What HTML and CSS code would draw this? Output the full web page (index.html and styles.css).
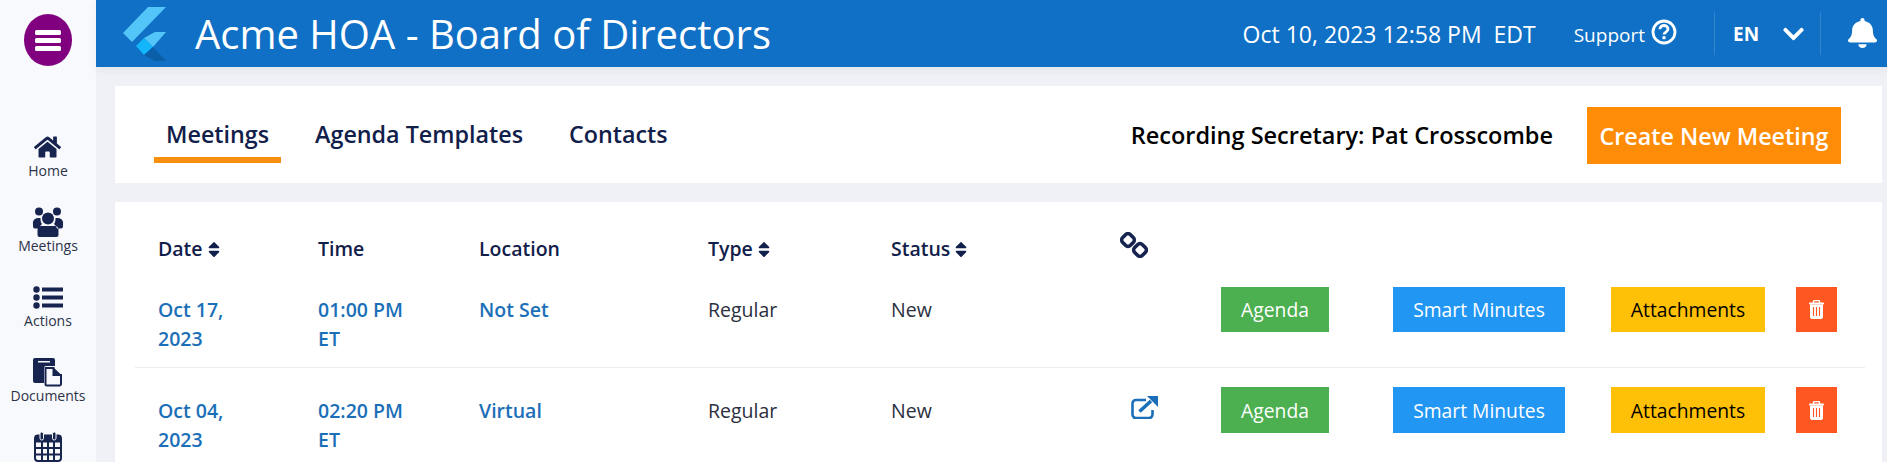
FILE: index.html
```
<!DOCTYPE html>
<html lang="en">
<head>
<meta charset="utf-8">
<title>Acme HOA - Board of Directors</title>
<link rel="stylesheet" href="styles.css">
</head>
<body>
<aside class="sidebar">
  <button class="menu-btn" aria-label="Menu">
    <svg width="26" height="22" viewBox="0 0 26 22"><rect x="0" y="1" width="26" height="5" rx="1.5"/><rect x="0" y="9" width="26" height="5" rx="1.5"/><rect x="0" y="17" width="26" height="5" rx="1.5"/></svg>
  </button>
  <nav class="side-nav">
    <a class="side-item"><span class="side-icon"><svg width="27" height="24" viewBox="0 0 576 512"><path d="M280.37 148.26L96 300.11V464a16 16 0 0 0 16 16l112.06-.29a16 16 0 0 0 15.92-16V368a16 16 0 0 1 16-16h64a16 16 0 0 1 16 16v95.64a16 16 0 0 0 16 16.05L464 480a16 16 0 0 0 16-16V300L295.67 148.26a12.19 12.19 0 0 0-15.3 0zM571.6 251.47L488 182.56V44.05a12 12 0 0 0-12-12h-56a12 12 0 0 0-12 12v72.61L318.47 43a48 48 0 0 0-61 0L4.34 251.47a12 12 0 0 0-1.6 16.9l25.5 31A12 12 0 0 0 45.15 301l235.22-193.74a12.19 12.19 0 0 1 15.3 0L530.9 301a12 12 0 0 0 16.9-1.6l25.5-31a12 12 0 0 0-1.7-16.93z"/></svg></span><span class="side-label">Home</span></a>
    <a class="side-item"><span class="side-icon"><svg width="32" height="30" viewBox="0 0 32 30"><circle cx="7" cy="4.5" r="4"/><circle cx="25" cy="4.5" r="4"/><circle cx="16" cy="11.5" r="6"/><path d="M1 17a5 5 0 0 1 5-6h2.500a9 9 0 0 0 1.500 6a9 9 0 0 0-3 4.500H3a2 2 0 0 1-2-2zM31 17a5 5 0 0 0-5-6h-2.500a9 9 0 0 1-1.500 6a9 9 0 0 1 3 4.500h4a2 2 0 0 0 2-2zM9.500 19h13a4 4 0 0 1 4 4v5a2 2 0 0 1-2 2h-17a2 2 0 0 1-2-2v-5a4 4 0 0 1 4-4z"/></svg></span><span class="side-label">Meetings</span></a>
    <a class="side-item"><span class="side-icon"><svg width="30" height="23" viewBox="0 0 30 23"><circle cx="3.500" cy="3.500" r="3.200"/><circle cx="3.500" cy="11.500" r="3.200"/><circle cx="3.500" cy="19.500" r="3.200"/><rect x="9" y="1.500" width="21" height="4"/><rect x="9" y="9.500" width="21" height="4"/><rect x="9" y="17.500" width="21" height="4"/></svg></span><span class="side-label">Actions</span></a>
    <a class="side-item"><span class="side-icon"><svg width="30" height="29" viewBox="0 0 30 29"><path d="M2 0h18a2 2 0 0 1 2 2v6H13a2 2 0 0 0-2 2v15H2a2 2 0 0 1-2-2V2a2 2 0 0 1 2-2z"/><rect x="5" y="3" width="12" height="1.500" fill="#f8f9fc"/><path d="M12.500 10h8v7h7.500v9a1.500 1.500 0 0 1-1.500 1.500H14a1.500 1.500 0 0 1-1.500-1.500z" fill="#f8f9fc" stroke="#16244f" stroke-width="2"/><path d="M20.500 9.500L29 17.500h-8.500z"/></svg></span><span class="side-label">Documents</span></a>
    <a class="side-item" aria-label="Calendar"><span class="side-icon"><svg width="28" height="30" viewBox="0 0 28 30"><rect x="1" y="3.500" width="26" height="25.500" rx="3" fill="none" stroke="#16244f" stroke-width="2"/><rect x="1" y="3.500" width="26" height="7"/><rect x="6" y="0" width="3.500" height="8" rx="1.700" stroke="#f8f9fc"/><rect x="18.500" y="0" width="3.500" height="8" rx="1.700" stroke="#f8f9fc"/><path d="M1 16h26M1 22.500h26M8 10v19M14 10v19M20 10v19" stroke="#16244f" stroke-width="2" fill="none"/></svg></span></a>
  </nav>
</aside>
<div class="page">
  <header class="topbar">
    <svg class="logo" width="44" height="56" viewBox="0 0 44 56"><path d="M43 1H25L0 27l9 9z" fill="#54c5f8"/><path d="M43 26H32L21 32l9 9z" fill="#54c5f8"/><path d="M13 40l8-8 9 9-9 8z" fill="#12b6fb"/><path d="M21 49l9-8 13 14H32z" fill="#0a5fa8"/></svg>
    <h1 class="title">Acme HOA - Board of Directors</h1>
    <span class="clock">Oct 10, 2023 12:58 PM&nbsp; EDT</span>
    <a class="support">Support</a>
    <svg class="help" width="26" height="26" viewBox="0 0 26 26"><circle cx="13" cy="13" r="11" fill="none" stroke="#fff" stroke-width="2.800"/><path d="M9 10.200c0-2.500 2-3.700 4-3.700s4 1.300 4 3.500c0 3-4 3-4 5.500" fill="none" stroke="#fff" stroke-width="2.800"/><rect x="11.500" y="17.200" width="3" height="3" fill="#fff"/></svg>
    <div class="lang"><span class="lang-code">EN</span><svg class="chevron" width="21" height="24" viewBox="0 0 448 512"><path d="M207.029 381.476L12.686 187.132c-9.373-9.373-9.373-24.569 0-33.941l22.667-22.667c9.357-9.357 24.522-9.375 33.901-.04L224 284.505l154.745-154.021c9.379-9.335 24.544-9.317 33.901.04l22.667 22.667c9.373 9.373 9.373 24.569 0 33.941L240.971 381.476c-9.373 9.372-24.569 9.372-33.942 0z"/></svg></div>
    <svg class="bell" width="29" height="30" viewBox="0 0 448 512" preserveAspectRatio="none"><path d="M224 512c35.32 0 63.97-28.65 63.97-64H160.03c0 35.35 28.65 64 63.97 64zm215.39-149.71c-19.32-20.76-55.47-51.99-55.47-154.29 0-77.7-54.48-139.9-127.94-155.16V32c0-17.67-14.32-32-31.98-32s-31.98 14.33-31.98 32v20.84C118.56 68.1 64.08 130.3 64.08 208c0 102.3-36.15 133.53-55.47 154.29-6 6.45-8.66 14.16-8.61 21.71.11 16.4 12.98 32 32.1 32h383.8c19.12 0 32-15.6 32.1-32 .05-7.55-2.61-15.27-8.61-21.71z"/></svg>
  </header>
  <main class="content">
    <section class="card tabs-card">
      <nav class="tabs">
        <a class="tab active">Meetings</a>
        <a class="tab">Agenda Templates</a>
        <a class="tab">Contacts</a>
      </nav>
      <span class="secretary">Recording Secretary: Pat Crosscombe</span>
      <button class="create">Create New Meeting</button>
    </section>
    <section class="card table-card">
      <div class="grid head">
        <span class="th">Date<svg class="sort" width="12" height="19" viewBox="0 0 320 512"><path d="M41 288h238c21.400 0 32.100 25.900 17 41L177 448c-9.400 9.400-24.600 9.400-33.900 0L24 329c-15.100-15.100-4.400-41 17-41zm255-105L177 64c-9.400-9.400-24.600-9.400-33.900 0L24 183c-15.100 15.100-4.400 41 17 41h238c21.400 0 32.100-25.900 17-41z"/></svg></span>
        <span class="th">Time</span>
        <span class="th">Location</span>
        <span class="th">Type<svg class="sort" width="12" height="19" viewBox="0 0 320 512"><path d="M41 288h238c21.400 0 32.100 25.900 17 41L177 448c-9.400 9.400-24.600 9.400-33.900 0L24 329c-15.100-15.100-4.400-41 17-41zm255-105L177 64c-9.400-9.400-24.600-9.400-33.900 0L24 183c-15.100 15.100-4.400 41 17 41h238c21.400 0 32.100-25.900 17-41z"/></svg></span>
        <span class="th">Status<svg class="sort" width="12" height="19" viewBox="0 0 320 512"><path d="M41 288h238c21.400 0 32.100 25.900 17 41L177 448c-9.400 9.400-24.600 9.400-33.900 0L24 329c-15.100-15.100-4.400-41 17-41zm255-105L177 64c-9.400-9.400-24.600-9.400-33.900 0L24 183c-15.100 15.100-4.400 41 17 41h238c21.400 0 32.100-25.900 17-41z"/></svg></span>
        <svg class="link-head" width="28" height="26" viewBox="0 0 28 26"><g fill="none" stroke="#16244f" stroke-width="3.600"><rect x="2.500" y="2.500" width="11" height="11" rx="3.500" transform="rotate(45 8 8)"/><rect x="14.500" y="12.500" width="11" height="11" rx="3.500" transform="rotate(45 20 18)"/></g></svg>
      </div>
      <div class="grid row first">
        <a class="cell link">Oct 17, 2023</a>
        <a class="cell link">01:00 PM ET</a>
        <a class="cell link">Not Set</a>
        <span class="cell">Regular</span>
        <span class="cell">New</span>
        <span></span>
        <div class="actions">
          <button class="btn agenda">Agenda</button>
          <button class="btn minutes">Smart Minutes</button>
          <button class="btn attach">Attachments</button>
          <button class="btn trash" aria-label="Delete"><svg width="15" height="19" viewBox="0 0 15 19"><path d="M1 4.500h13v12.500a2 2 0 0 1-2 2H3a2 2 0 0 1-2-2z" fill="#fff"/><rect x="0" y="2.500" width="15" height="2" rx=".8" fill="#fff"/><path d="M4.500 3V1.500a1 1 0 0 1 1-1h4a1 1 0 0 1 1 1V3" fill="none" stroke="#fff" stroke-width="1.400"/><path d="M4.500 7v9M7.500 7v9M10.500 7v9" stroke="#ff5722" stroke-width="1.100"/></svg></button>
        </div>
      </div>
      <div class="grid row second">
        <a class="cell link">Oct 04, 2023</a>
        <a class="cell link">02:20 PM ET</a>
        <a class="cell link">Virtual</a>
        <span class="cell">Regular</span>
        <span class="cell">New</span>
        <svg class="ext" width="28" height="23" viewBox="0 0 28 23"><path d="M15 4H5a3.500 3.500 0 0 0-3.500 3.500v11A3.500 3.500 0 0 0 5 22h13a3.500 3.500 0 0 0 3.500-3.500V14" fill="none" stroke="#1b6fb8" stroke-width="2.600"/><path d="M8.500 15.500L20 5" stroke="#1b6fb8" stroke-width="3.600" fill="none"/><path d="M16 0h11v11z" fill="#1b6fb8"/></svg>
        <div class="actions">
          <button class="btn agenda">Agenda</button>
          <button class="btn minutes">Smart Minutes</button>
          <button class="btn attach">Attachments</button>
          <button class="btn trash" aria-label="Delete"><svg width="15" height="19" viewBox="0 0 15 19"><path d="M1 4.500h13v12.500a2 2 0 0 1-2 2H3a2 2 0 0 1-2-2z" fill="#fff"/><rect x="0" y="2.500" width="15" height="2" rx=".8" fill="#fff"/><path d="M4.500 3V1.500a1 1 0 0 1 1-1h4a1 1 0 0 1 1 1V3" fill="none" stroke="#fff" stroke-width="1.400"/><path d="M4.500 7v9M7.500 7v9M10.500 7v9" stroke="#ff5722" stroke-width="1.100"/></svg></button>
        </div>
      </div>
    </section>
  </main>
</div>
</body>
</html>
```
FILE: styles.css
```
* { box-sizing: border-box; }
html, body { height: 100%; }
body {
  margin: 0;
  display: flex;
  overflow: hidden;
  font-family: "Open Sans", sans-serif;
  background: #f0f1f6;
  color: #2b2f3e;
}
button { font-family: inherit; border: 0; padding: 0; }

/* sidebar */
.sidebar {
  width: 96px;
  flex: none;
  background: #f8f9fc;
  padding-top: 14px;
  display: flex;
  flex-direction: column;
  align-items: center;
}
.menu-btn {
  width: 48px;
  height: 52px;
  flex: none;
  border-radius: 50%;
  background: #800080;
  display: flex;
  align-items: center;
  justify-content: center;
}
.menu-btn svg { fill: #fff; }
.side-nav { margin-top: 68px; flex: none; display: flex; flex-direction: column; align-items: center; gap: 27px; }
.side-item { display: flex; flex-direction: column; align-items: center; }
.side-icon { height: 26px; display: flex; align-items: center; justify-content: center; }
.side-icon svg { fill: #16244f; flex: none; }
.side-label { font-size: 14px; line-height: 22px; color: #2c3349; }

/* top bar */
.page { flex: 1; min-width: 0; display: flex; flex-direction: column; }
.topbar {
  height: 67px;
  flex: none;
  background: #0f70c5;
  color: #fff;
  display: flex;
  align-items: center;
  padding-left: 27px;
  box-shadow: 0 3px 8px rgba(40, 50, 90, .06);
}
.logo { flex: none; }
.title { margin: 0 0 0 28px; font-size: 40px; font-weight: 400; line-height: 48px; white-space: nowrap; }
.clock { margin-left: auto; font-size: 23px; white-space: nowrap; }
.support { margin-left: 38px; font-size: 19px; margin-top: 2px; }
.help { margin-left: 6px; margin-top: -3px; }
.lang {
  margin-left: 37px;
  height: 43px;
  width: 107px;
  padding-left: 18px;
  border-left: 1px solid rgba(255, 255, 255, .15);
  border-right: 1px solid rgba(255, 255, 255, .15);
  display: flex;
  align-items: center;
}
.lang-code { font-size: 19px; font-weight: 700; }
.chevron { fill: #fff; margin-left: 24px; }
.bell { fill: #fff; margin-left: 27px; margin-right: 10px; margin-top: -1px; }

/* content */
.content { flex: 1; min-height: 0; padding: 19px 5px 0 19px; display: flex; flex-direction: column; gap: 19px; }
.card { background: #fff; }
.tabs-card {
  height: 97px;
  flex: none;
  padding: 21px 41px 0 39px;
  display: flex;
  align-items: flex-start;
}
.tabs { display: flex; gap: 22px; }
.tab {
  height: 56px;
  line-height: 55px;
  padding: 0 12px;
  font-size: 23.3px;
  font-weight: 600;
  color: #11204a;
  border-bottom: 6px solid transparent;
}
.tab.active { border-bottom-color: #f7900f; }
.secretary { margin-left: auto; line-height: 56px; font-size: 23.5px; font-weight: 600; color: #000; }
.create {
  margin-left: 34px;
  width: 254px;
  height: 57px;
  background: #ff8c06;
  color: #fff;
  font-size: 23.3px;
  font-weight: 600;
}

/* table */
.table-card { flex: 1; padding: 30px 17px 0 20px; }
.grid {
  display: grid;
  grid-template-columns: 160px 161px 229px 183px 229px 101px auto;
  padding-left: 23px;
  align-items: start;
}
.head { height: 34px; }
.th { font-size: 19.5px; line-height: 34px; font-weight: 600; color: #11204a; display: flex; align-items: center; }
.sort { fill: #11204a; margin-left: 5px; }
.link-head { margin-top: 0; }
.row { border-bottom: 1px solid #ebecef; height: 102px; }
.row.first { padding-top: 21px; }
.row.second { padding-top: 19px; border-bottom: 0; }
.cell { font-size: 19.5px; line-height: 28.5px; padding-right: 55px; }
.row.first .cell { margin-top: 9px; }
.row.second .cell { margin-top: 10px; }
.link { color: #1b6fb8; font-weight: 600; }
.ext { margin: 9px 0 0 11px; }
.actions { display: flex; }
.btn {
  height: 45px;
  font-size: 19.3px;
  display: flex;
  align-items: center;
  justify-content: center;
  color: #fff;
}
.row.second .btn { height: 46px; }
.agenda { width: 108px; background: #4caf50; }
.minutes { width: 172px; margin-left: 64px; background: #2196f3; }
.attach { width: 154px; margin-left: 46px; background: #ffc107; color: #000; }
.trash { width: 41px; margin-left: 31px; background: #ff5722; }
```
